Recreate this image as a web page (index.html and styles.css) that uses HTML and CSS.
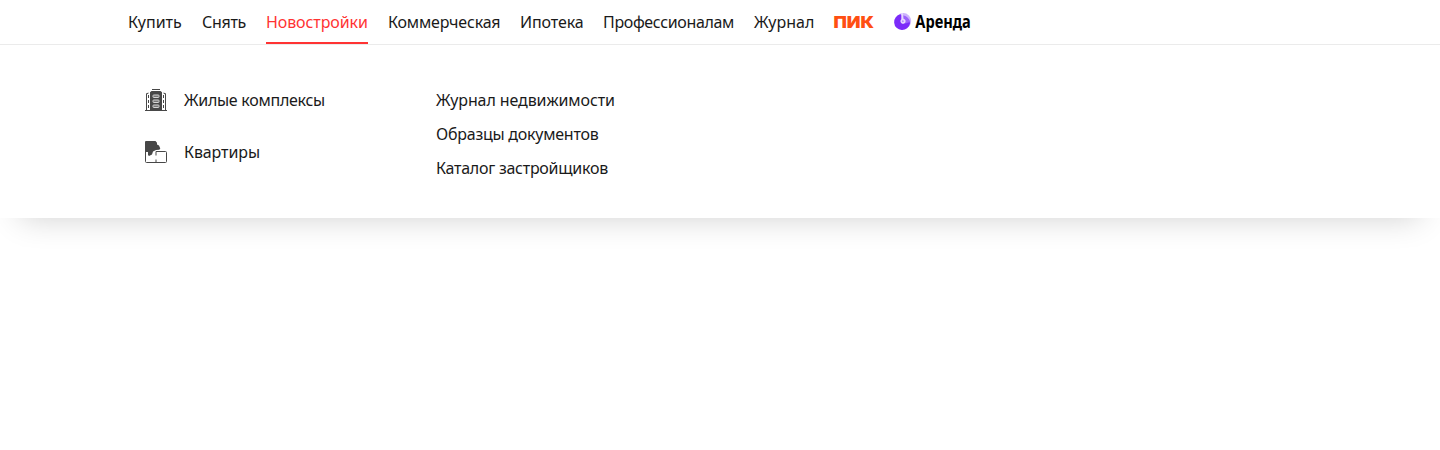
FILE: index.html
```html
<!DOCTYPE html>
<html lang="ru">
<head>
<meta charset="utf-8">
<title>Недвижимость</title>
<link rel="stylesheet" href="styles.css">
</head>
<body>
<header class="header">
  <nav class="nav">
    <a class="nav-link buy">Купить</a>
    <a class="nav-link rent">Снять</a>
    <a class="nav-link new active">Новостройки</a>
    <a class="nav-link commercial">Коммерческая</a>
    <a class="nav-link mortgage">Ипотека</a>
    <a class="nav-link pro">Профессионалам</a>
    <a class="nav-link journal">Журнал</a>
    <a class="nav-logo">
      <svg width="40" height="44" viewBox="0 0 40 44"><text class="pik" x="-.6" y="28" textLength="40.600" lengthAdjust="spacingAndGlyphs">ПИК</text></svg>
    </a>
    <a class="nav-logo">
      <svg width="84" height="44" viewBox="0 0 84 44">
        <circle cx="9.300" cy="21" r="7.900" fill="#cdb4fc"/>
        <path d="M6.500 14.200A8 8 0 1 0 16 23.500C16 19.500 12.500 16.500 8.500 16Z" fill="#7b2bf9"/>
        <path d="M8.500 15.500c3.500 0 6.500 2.500 7.500 6.500l-4.500 1.500-3-3Z" fill="#9c62fb"/>
        <path d="M7.300 13.300h1.700l.5 5.400a2.600 2.600 0 1 1-2.200.6Z" fill="#e6d9fe"/>
        <circle cx="8.800" cy="21.200" r="1" fill="#b48bfc"/>
        <text class="arenda" x="21.300" y="28" textLength="55.500" lengthAdjust="spacingAndGlyphs">Аренда</text>
      </svg>
    </a>
  </nav>
</header>
<section class="menu">
  <div class="main-links">
    <a class="icon-link">
      <svg width="22" height="22" viewBox="0 0 22 22" fill="#474747">
        <path d="M7 0h8v1H7zM5 3.200 6.500 2h9L17 3.200V21H5zM0 21h22v1H0zM1 4.500 3.500 3.500v1L2 5.200V21H1zM21 4.500l-2.500-1v1l1.500.7V21h1z"/>
        <path d="M3 6h1v3H3zm0 5h1v3H3zm0 5h1v3H3zM18 6h1v3h-1zm0 5h1v3h-1zm0 5h1v3h-1z"/>
        <g fill="#777" stroke="#d4d4d4"><rect x="8" y="6" width="6" height="2.500" rx=".7"/><rect x="8" y="11" width="6" height="2.500" rx=".7"/><rect x="8" y="16" width="6" height="2.500" rx=".7"/></g>
      </svg>
      <span class="complexes">Жилые комплексы</span>
    </a>
    <a class="icon-link">
      <svg width="22" height="22" viewBox="0 0 22 22">
        <path d="M.5 10v10.500a1 1 0 0 0 1 1h19a1 1 0 0 0 1-1v-9a1 1 0 0 0-1-1H11v4M11 18.500v3" fill="none" stroke="#474747"/>
        <path d="M1 0h9.500L12 1.800V3.500l2 1 1.300 3-1 1.200L11 9 8 10.500 7 13.500 4 15l-1-1v-3H0V1a1 1 0 0 1 1-1Z" fill="#474747"/>
      </svg>
      <span class="flats">Квартиры</span>
    </a>
  </div>
  <div class="extra-links">
    <a class="magazine">Журнал недвижимости</a>
    <a class="samples">Образцы документов</a>
    <a class="catalog">Каталог застройщиков</a>
  </div>
</section>
</body>
</html>
```

FILE: styles.css
```css
body {
  margin: 0;
  min-height: 450px;
  background: #fff;
  color: #1a1a1a;
  font: 16px/24px "Noto Sans", sans-serif;
  white-space: nowrap;
}
.header { border-bottom: 1px solid #ebebeb; height: 44px; }
.nav { display: flex; gap: 20px; padding-left: 128px; height: 44px; }
.nav-link { box-sizing: border-box; height: 44px; line-height: 45px; }
.active { color: #f33; border-bottom: 2px solid #f33; }
.nav-logo, .nav-logo svg { display: block; overflow: visible; }
.buy { width: 54px; }
.rent { width: 44px; letter-spacing: -.3px; }
.new { width: 102px; letter-spacing: -.1px; }
.commercial { width: 112px; letter-spacing: -.18px; }
.mortgage { width: 63px; letter-spacing: -.1px; }
.pro { width: 131px; letter-spacing: -.35px; }
.journal { width: 60px; }
.pik { font: 900 16.5px Inter, sans-serif; fill: #ff4f12; }
.arenda { font: 700 17px "Noto Sans", sans-serif; fill: #000; }
.menu {
  box-sizing: border-box;
  display: flex;
  height: 173px;
  padding: 43px 0 0 145px;
  background: #fff;
  box-shadow: 0 20px 30px -20px rgba(0, 0, 0, .19);
}
.main-links { display: flex; flex-direction: column; gap: 28px; width: 291px; }
.icon-link { display: flex; align-items: center; gap: 17px; height: 24px; }
.extra-links { display: flex; flex-direction: column; gap: 10px; }
.complexes { letter-spacing: -.27px; }
.flats { letter-spacing: -.1px; }
.magazine { letter-spacing: -.1px; }
.samples { letter-spacing: -.24px; }
.catalog { letter-spacing: -.26px; }
```
